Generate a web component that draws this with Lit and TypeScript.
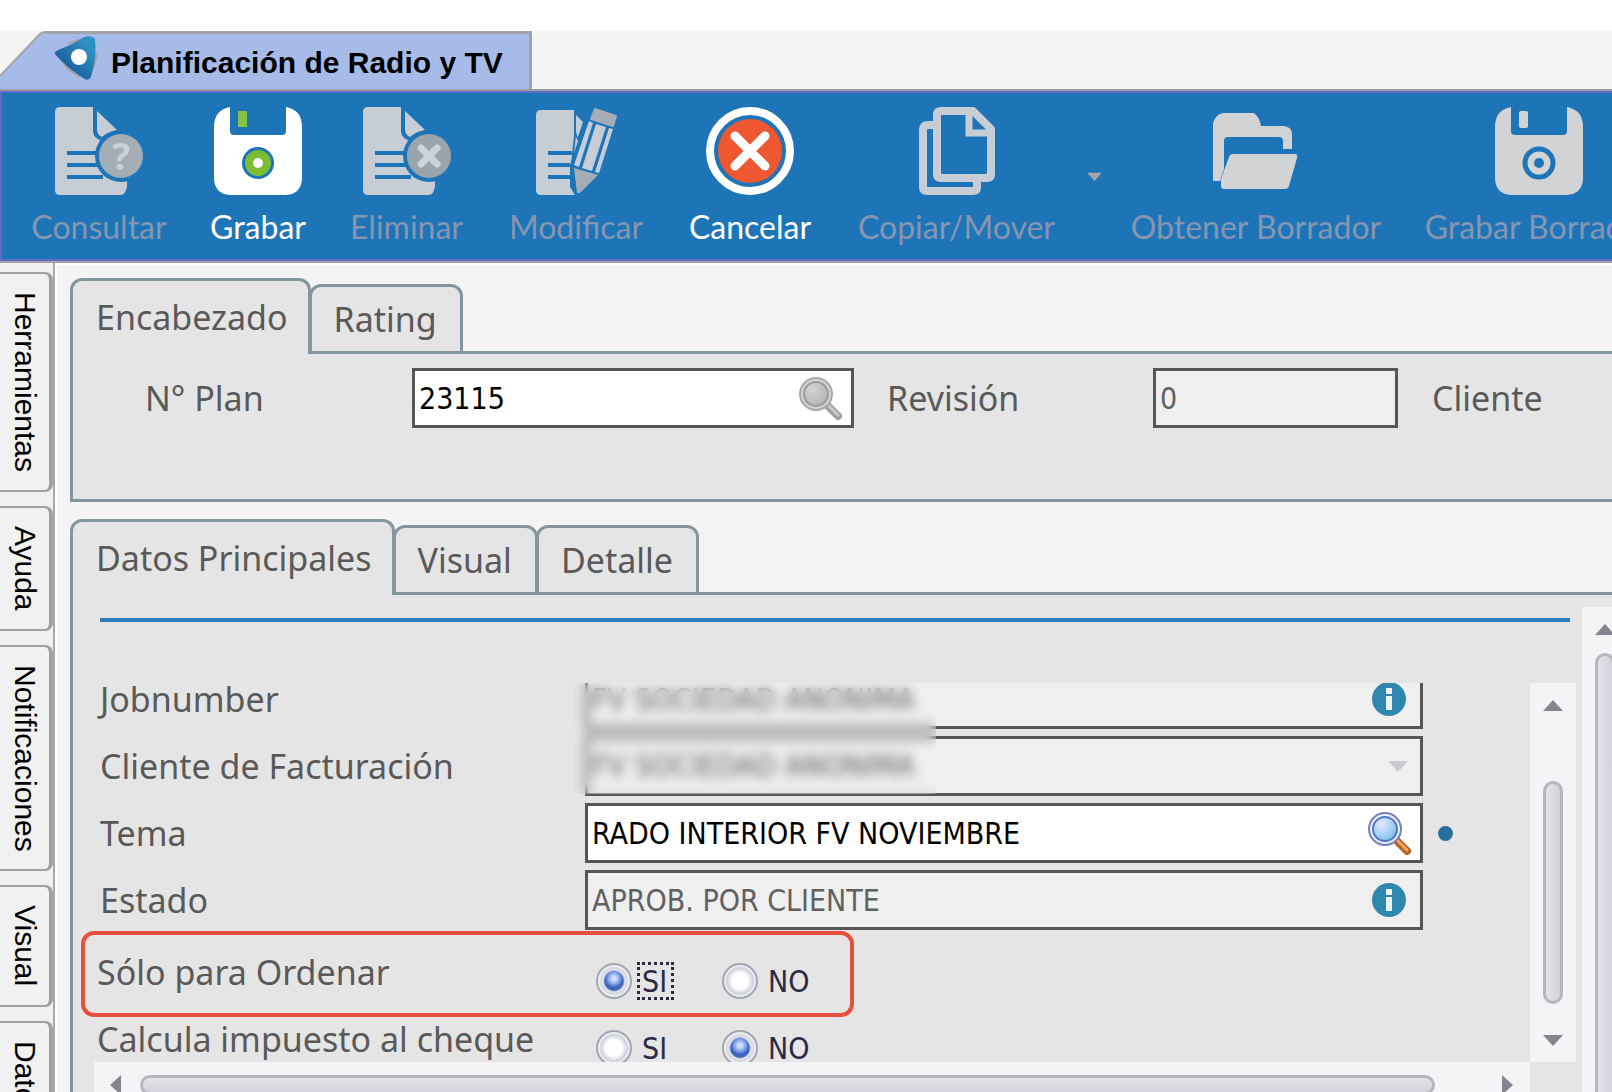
import { LitElement, html, svg, css } from "lit";
import { customElement } from "lit/decorators.js";
import { classMap } from "lit/directives/class-map.js";

const lines = svg`<path d="M12 46H44M12 58H44M12 70H48" stroke="#1d75b8" stroke-width="4"/>`;
const sheet = svg`
  <path fill="#c6cdd5" d="M5 0H38V25Q39 31 45 33L72 50V79Q71 88 65 88H5Q0 88 0 83V5Q0 0 5 0Z"/>
  <path fill="#c6cdd5" d="M42 4L62 23Q52 25 47 30Q42 28 42 22Z"/>
  ${lines}
  <circle cx="66" cy="49" r="26" fill="#1d75b8"/>`;

const icons = {
  query: svg`<svg class="icon" viewBox="0 0 88 88">${sheet}
    <circle cx="66" cy="49" r="22" fill="#a2adb6"/>
    <text x="66" y="63" text-anchor="middle" font-family="Noto Sans, sans-serif" font-weight="700" font-size="38" fill="#c9d0d8">?</text></svg>`,
  remove: svg`<svg class="icon" viewBox="0 0 88 88">${sheet}
    <circle cx="66" cy="49" r="22" fill="#9aa4ac"/>
    <path d="M58 41L74 57M74 41L58 57" stroke="#cdd3d9" stroke-width="7" stroke-linecap="round"/></svg>`,
  save: svg`<svg class="icon" viewBox="0 0 88 88">
    <path fill="#fff" d="M16 0V24Q16 28 20 28H68Q72 28 72 24V0Q88 3 88 20V72Q87 87 72 88H16Q1 87 0 72V20Q0 3 16 0Z"/>
    <rect x="24" y="4" width="9" height="16" fill="#84c341"/>
    <circle cx="44" cy="56" r="16" fill="#1d75b8"/><circle cx="44" cy="56" r="13" fill="#7cbc33"/><circle cx="44" cy="56" r="5" fill="#fff"/></svg>`,
  saveDraft: svg`<svg class="icon" viewBox="0 0 88 88">
    <path fill="#d1d3d5" d="M16 0V24Q16 28 20 28H68Q72 28 72 24V0Q88 3 88 20V72Q87 87 72 88H16Q1 87 0 72V20Q0 3 16 0Z"/>
    <rect x="24" y="4" width="9" height="17" rx="2" fill="#d1d3d5"/>
    <circle cx="44" cy="56" r="14" fill="#d1d3d5" stroke="#1d75b8" stroke-width="5"/><circle cx="44" cy="56" r="5" fill="#1d75b8"/></svg>`,
  edit: svg`<svg class="icon" viewBox="0 0 88 88">
    <path fill="#c6cdd5" d="M9 3H42V26L46 34L38 58V80L43 88H9Q4 88 4 83V8Q4 3 9 3Z"/>
    <path fill="#c6cdd5" d="M44 8L51 15L46 30Q44 28 44 22Z"/>
    <path d="M16 46H40M16 58H38M16 70H38" stroke="#1d75b8" stroke-width="4"/>
    <path d="M43 3V28L40 58V74L44 88" fill="none" stroke="#1d75b8" stroke-width="2"/>
    <path fill="#a4adb5" stroke="#a4adb5" stroke-width="2" stroke-linejoin="round" d="M63 2L84 9L81 19L59 12Z"/>
    <path fill="#c6cdd5" d="M57 14L61 16L47 60L42 58ZM64 17L74 20L60 64L50 61ZM77 21L81 22L67 66L63 65Z"/>
    <path fill="#a4adb5" d="M42 61L66 68L48 86L45 86Z"/></svg>`,
  cancel: svg`<svg class="icon" viewBox="0 0 88 88">
    <circle cx="44" cy="44" r="40" fill="none" stroke="#fff" stroke-width="8"/>
    <circle cx="44" cy="44" r="32" fill="#ee5730"/>
    <path d="M29 29L59 59M59 29L29 59" stroke="#fff" stroke-width="9" stroke-linecap="round"/></svg>`,
  copy: svg`<svg class="icon" viewBox="0 0 88 88"><g fill="none" stroke="#c6cdd5" stroke-width="8" stroke-linejoin="round">
    <path d="M28 4H60L78 22V67Q78 71 74 71H28Q24 71 24 67V8Q24 4 28 4Z"/>
    <path d="M56 6V26H76" stroke-width="7" stroke-linejoin="miter"/>
    <path d="M20 18H15Q10 18 10 23V80Q10 84 14 84H60Q64 84 64 80V74"/></g></svg>`,
  open: svg`<svg class="icon" viewBox="0 0 88 88"><g fill="#d1d3d5">
    <path d="M1 74V16Q4 7 11 6H42Q48 11 49 19H72Q80 20 80 27V42H71V34Q71 30 67 30H16Q12 30 12 34V62L8 74Z"/>
    <path d="M20 47H83Q86 47 85 51L77 79Q76 82 73 82H12Q9 82 9 79V72L17 50Q18 47 20 47Z"/></g></svg>`,
};

const logo = svg`<svg class="logo" viewBox="0 0 44 46">
  <defs><linearGradient id="lg" x1="0" y1="1" x2="1" y2="0"><stop offset=".1" stop-color="#154f93"/><stop offset=".8" stop-color="#2d90c2"/></linearGradient></defs>
  <path d="M14 9Q22 5 32 4M42 18Q42 26 39 32M7 24Q14 36 26 42" fill="none" stroke="#a79f98" stroke-width="2"/>
  <path fill="url(#lg)" d="M1 19Q0 17 4 15Q20 9 30 2Q38 0 41 4Q43 22 37 42Q34 47 29 43Q12 32 1 19Z"/>
  <circle cx="25" cy="22" r="8" fill="#fff"/></svg>`;

const magnifier = (on: boolean) => {
  const id = on ? "lens-on" : "lens-off";
  return svg`<svg class="mag" viewBox="0 0 46 46">
  <defs><radialGradient id=${id} cx=".35" cy=".3" r=".8"><stop offset="0" stop-color=${on ? "#e6e8ff" : "#d4d4d4"}/><stop offset="1" stop-color=${on ? "#74bdea" : "#b2b2b2"}/></radialGradient></defs>
  <path d="M31 31L41 41" stroke=${on ? "#b5652b" : "#a0a0a0"} stroke-width="8" stroke-linecap="round"/>
  <path d="M31 30L41 40" stroke=${on ? "#f0a75a" : "#c8c8c8"} stroke-width="3" stroke-linecap="round"/>
  <circle cx="19" cy="19" r="16" fill=${on ? "#eef2fb" : "#d6d6d6"} stroke=${on ? "#7382ba" : "#a9a9a9"} stroke-width="2"/>
  <circle cx="19" cy="19" r="12" fill="url(#${id})" stroke=${on ? "#5378c8" : "#9c9c9c"} stroke-width="2"/></svg>`;
};

const info = svg`<svg class="info" viewBox="0 0 34 34"><circle cx="17" cy="17" r="17" fill="#2f87b0"/>
  <rect x="14" y="6" width="6" height="6" fill="#eef3f5"/><rect x="14" y="14" width="6" height="14" fill="#eef3f5"/></svg>`;

const arrow = (d: string) => svg`<svg class="arrow" viewBox="0 0 20 20"><path fill="currentColor" d=${d}/></svg>`;
const UP = "M10 5L20 16H0Z";
const DOWN = "M0 5H20L10 16Z";
const LEFT = "M4 10L15 0V20Z";
const RIGHT = "M5 0L16 10L5 20Z";

@customElement("app-root")
export class AppRoot extends LitElement {
  static styles = css`
    :host { display: block; }
    * { box-sizing: border-box; }
    button, input, select { font: inherit; color: inherit; margin: 0; padding: 0; border: 0; background: none; border-radius: 0; outline: none; min-width: 0; }
    svg { display: block; flex: none; }
    .app { height: 100vh; overflow: hidden; display: flex; flex-direction: column; background: #f4f4f4; color: #595959; font: 34px/46px "Noto Sans", sans-serif; }

    .windows { flex: none; background: #f4f4f4; border-top: 31px solid #fff; display: flex; }
    .window { display: flex; height: 58px; color: #000; font: bold 30px/44px "Liberation Sans", sans-serif; }
    .slope { width: 46px; height: 58px; }
    .caption { display: flex; align-items: center; gap: 13px; padding: 0 26px 0 8px; background: #a6bbe8; border-top: 3px solid #a2a3a8; border-right: 3px solid #a2a3a8; white-space: nowrap; }
    .caption span { padding-top: 3px; }
    .logo { width: 44px; height: 46px; margin-bottom: 8px; }

    .toolbar { flex: none; height: 174px; border-top: 2px solid #9c9ca4; border-bottom: 2px solid #a4a4a8; overflow: hidden; }
    .tools { height: 170px; border: 2px solid #5f6bc8; border-right: 0; background: #1d75b8; padding: 14px 0 0 7px; display: grid; grid-template-columns: 180px 138px 159px 180px 168px 245px 31px 292px 274px; align-items: start; font: 32px/44px Lato, sans-serif; }
    .tool { display: flex; flex-direction: column; align-items: center; gap: 10px; color: #fff; white-space: nowrap; }
    .tool:disabled { color: #8795b0; }
    .icon { width: 88px; height: 88px; }
    .more { color: #a5a5b0; padding: 62px 0 0 8px; }
    .more .arrow { width: 15px; height: 15px; }

    .main { flex: 1; min-height: 0; display: flex; }
    .side { flex: none; width: 55px; padding-top: 9px; background: #f0f0f0; border-right: 2px solid #a8a8a8; display: flex; flex-direction: column; gap: 14px; overflow: hidden; }
    .side button { flex: none; width: 53px; padding: 18px 0; writing-mode: vertical-rl; text-align: left; border: 2px solid #a0a0a0; border-left: 0; border-right-width: 4px; border-radius: 0 8px 8px 0; background: #f1f1f1; color: #000; font: 30px/48px "Liberation Sans", sans-serif; }
    .work { flex: 1; min-width: 0; border-left: 2px solid #fff; border-top: 2px solid #fff; padding: 13px 0 0 13px; display: flex; flex-direction: column; gap: 17px; }

    .group { display: flex; flex-direction: column; min-height: 0; }
    .group.fill { flex: 1; }
    .tabs { flex: none; display: flex; align-items: flex-end; position: relative; z-index: 1; margin-bottom: -3px; }
    .tab { height: 70px; padding: 9px 23px 0 22px; margin-left: -2px; border: 3px solid #84969d; border-radius: 12px 12px 0 0; background: #e5e5e5; line-height: 46px; display: flex; align-items: flex-start; }
    .tab.on { height: 76px; padding: 13px 20px 0 23px; margin-left: 0; border-bottom: 0; }
    .panel { flex: 1; min-height: 0; border: 3px solid #84969d; border-right: 0; background: #e5e5e5; }

    .head { height: 145px; padding: 14px 0 0 72px; display: grid; grid-template-columns: 267px 442fr 33px 266px 245fr 34px 180px; align-items: center; align-content: start; }
    .head .field:nth-child(2) { grid-column: 2; }
    .head label:nth-child(3) { grid-column: 4; }
    .head label:nth-child(5) { grid-column: 7; }

    .field { height: 60px; min-width: 0; display: flex; align-items: center; border: 3px solid #565656; background: #efefef; font: 30px/36px "DejaVu Sans Condensed", "DejaVu Sans", sans-serif; color: #606060; padding-left: 4px; }
    .field.edit { background: #fff; color: #000; }
    .field input, .field select { flex: 1; height: 54px; opacity: 1; appearance: none; }
    .field button { flex: none; }
    .mag { width: 46px; height: 46px; margin-right: 8px; }
    .info { width: 34px; height: 34px; margin-right: 14px; }
    .arrow { width: 20px; height: 20px; }
    .field .arrow { color: #c9cacd; margin-right: 12px; }

    .body { display: flex; gap: 6px; overflow: hidden; border-bottom: 0; }
    .column { flex: 1; min-width: 0; position: relative; display: flex; flex-direction: column; padding-top: 23px; }
    .rule { flex: none; height: 4px; margin: 0 6px 61px 27px; border: 0; background: #2b7dbb; }
    .scroller { flex: 1; min-height: 0; display: grid; grid-template-columns: 1fr 46px; grid-template-rows: 1fr 30px; padding-left: 21px; }
    .view { position: relative; overflow: hidden; }
    .form { margin-top: -14px; padding-left: 6px; display: grid; gap: 7px; }
    .row { height: 60px; display: grid; grid-template-columns: 485px 1fr 107px; align-items: center; border: 0; margin: 0; padding: 0; }
    .row.first { margin-top: 12px; }
    .row.choice { grid-template-columns: 488px 1fr 107px; margin-left: -3px; }
    .row.choice > span { padding-bottom: 18px; }
    .dot { width: 15px; height: 15px; margin-left: 15px; border-radius: 50%; background: #276f9c; }
    .veil { position: absolute; left: 480px; top: 0; width: 362px; height: 111px; backdrop-filter: blur(6px); }
    .options { display: flex; padding-left: 11px; color: #2b2944; font: 30px/30px "DejaVu Sans Condensed", "DejaVu Sans", sans-serif; }
    .option { width: 126px; display: flex; align-items: center; gap: 5px; }
    .option input { appearance: none; flex: none; width: 36px; height: 36px; border-radius: 50%; border: 2px solid #a3a6b2; background: radial-gradient(circle, #fff 0 8px, #e4e5ea 11px, #cfd1da 13px, #eceef3 15px); }
    .option input:checked { background: radial-gradient(circle at 50% 42%, #cfe0fb 0 2px, #7d9fe6 6px, transparent 9px), radial-gradient(circle, #3f62bb 0 9px, #e6e8ef 11px, #d3d5de 13px, #eef0f5 15px); }
    .option span { border: 3px dotted transparent; padding: 2px 4px 0 2px; }
    .option .focus { border-color: #2b2944; }
    .mark { position: absolute; left: 8px; top: 336px; width: 773px; height: 86px; border: 4px solid #e64f3d; border-radius: 13px; pointer-events: none; }

    .bar { background: #f4f4f6; color: #84858f; display: flex; flex-direction: column; align-items: center; padding: 12px 0; overflow: hidden; }
    .thumb { flex: none; width: 20px; border: 3px solid #b5b6c1; border-radius: 10px; background: linear-gradient(90deg, #e3e3e8, #d3d4db); }
    .bar.inner .space { flex: 68; }
    .bar.inner .thumb { flex: 225; }
    .bar.inner .rest { flex: 27; }
    .bar.outer { flex: none; width: 30px; margin-top: 12px; padding: 12px 0 0 13px; align-items: flex-start; }
    .bar.outer .thumb { flex: 1; margin: 14px 0 -20px; }
    .bar.across { flex-direction: row; align-items: flex-start; padding: 13px 13px 0 12px; }
    .bar.across .thumb { flex: 1; width: auto; height: 20px; margin: 0 62px 0 14px; background: linear-gradient(#e3e3e8, #d3d4db); }
  `;

  private tool(icon: unknown, label: string, enabled = false) {
    return html`<button class="tool" ?disabled=${!enabled}>${icon}<span>${label}</span></button>`;
  }

  private tabs(names: string[]) {
    return html`<div class="tabs" role="tablist">${names.map((n, i) => html`
      <button class=${classMap({ tab: true, on: i === 0 })} role="tab" aria-selected=${i === 0}>${n}</button>`)}</div>`;
  }

  private choice(name: string, label: string, value: string, first = false) {
    return html`<div class=${classMap({ row: true, choice: true, first })} role="radiogroup" aria-labelledby=${name}>
      <span id=${name}>${label}</span>
      <div class="options">${["SI", "NO"].map(o => html`
        <label class="option"><input type="radio" name=${name} .checked=${o === value}><span class=${classMap({ focus: first && o === value })}>${o}</span></label>`)}
      </div></div>`;
  }

  render() {
    return html`<div class="app">
      <div class="windows"><div class="window">
        <svg class="slope" viewBox="0 0 46 58"><path fill="#a6bbe8" d="M0 46L40 4Q43 1 46 1V58H0Z"/><path fill="none" stroke="#a2a3a8" stroke-width="2" d="M0 45L39 4Q42 1 46 1"/></svg>
        <div class="caption">${logo}<span>Planificación de Radio y TV</span></div>
      </div></div>

      <div class="toolbar"><div class="tools" role="toolbar">
        ${this.tool(icons.query, "Consultar")}
        ${this.tool(icons.save, "Grabar", true)}
        ${this.tool(icons.remove, "Eliminar")}
        ${this.tool(icons.edit, "Modificar")}
        ${this.tool(icons.cancel, "Cancelar", true)}
        ${this.tool(icons.copy, "Copiar/Mover")}
        <button class="more" disabled>${arrow(DOWN)}</button>
        ${this.tool(icons.open, "Obtener Borrador")}
        ${this.tool(icons.saveDraft, "Grabar Borrador")}
      </div></div>

      <div class="main">
        <nav class="side">${["Herramientas", "Ayuda", "Notificaciones", "Visual", "Datos"].map(n => html`<button>${n}</button>`)}</nav>
        <main class="work">
          <section class="group">
            ${this.tabs(["Encabezado", "Rating"])}
            <div class="panel"><div class="head">
              <label for="plan">N° Plan</label>
              <div class="field edit"><input id="plan" value="23115"><button>${magnifier(false)}</button></div>
              <label for="rev">Revisión</label>
              <div class="field"><input id="rev" value="0" readonly></div>
              <label>Cliente</label>
            </div></div>
          </section>

          <section class="group fill">
            ${this.tabs(["Datos Principales", "Visual", "Detalle"])}
            <div class="panel body">
              <div class="column">
                <hr class="rule">
                <div class="scroller">
                  <div class="view">
                    <form class="form">
                      <div class="row"><label for="job">Jobnumber</label>
                        <div class="field"><input id="job" value="FV SOCIEDAD ANONIMA" readonly><button type="button">${info}</button></div></div>
                      <div class="row"><label for="bill">Cliente de Facturación</label>
                        <div class="field"><select id="bill" disabled><option>FV SOCIEDAD ANONIMA</option></select>${arrow(DOWN)}</div></div>
                      <div class="row"><label for="theme">Tema</label>
                        <div class="field edit"><input id="theme" value="RADO INTERIOR FV NOVIEMBRE"><button type="button">${magnifier(true)}</button></div><i class="dot"></i></div>
                      <div class="row"><label for="state">Estado</label>
                        <div class="field"><input id="state" value="APROB. POR CLIENTE" readonly><button type="button">${info}</button></div></div>
                      ${this.choice("order", "Sólo para Ordenar", "SI", true)}
                      ${this.choice("tax", "Calcula impuesto al cheque", "NO")}
                    </form>
                    <div class="veil"></div>
                  </div>
                  <div class="bar inner">${arrow(UP)}<i class="space"></i><i class="thumb"></i><i class="rest"></i>${arrow(DOWN)}</div>
                  <div class="bar across">${arrow(LEFT)}<i class="thumb"></i>${arrow(RIGHT)}</div>
                </div>
                <div class="mark"></div>
              </div>
              <div class="bar outer">${arrow(UP)}<i class="thumb"></i></div>
            </div>
          </section>
        </main>
      </div>
    </div>`;
  }
}
